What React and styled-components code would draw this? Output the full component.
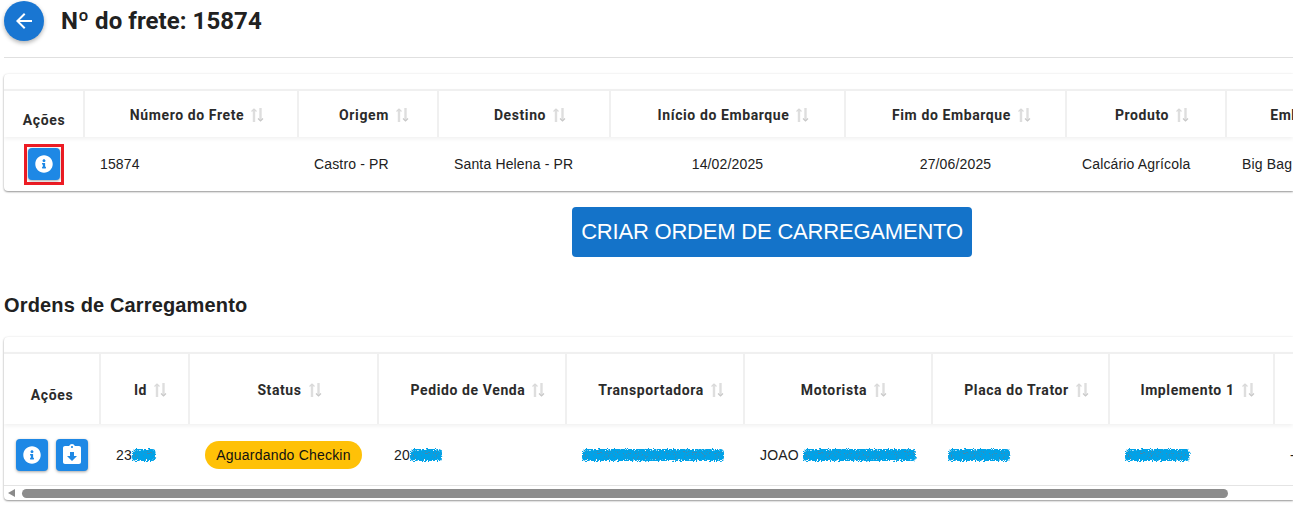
import React from "react";
import styled, { createGlobalStyle } from "styled-components";
import { FaInfoCircle } from "react-icons/fa";
import { MdArrowBack, MdAssignmentReturned } from "react-icons/md";

const GlobalStyle = createGlobalStyle`
  html, body {
    margin: 0;
    padding: 0;
    background: #fff;
    overflow: hidden;
  }
  body {
    width: 1293px;
    height: 505px;
    font-family: "Liberation Sans", Arial, sans-serif;
    color: #212121;
  }
`;

const Page = styled.div`
  width: 1293px;
  height: 505px;
  padding: 1px 0 0 4px;
  box-sizing: border-box;
  overflow: hidden;
`;

const TitleBar = styled.header`
  display: flex;
  align-items: center;
  gap: 17px;
  height: 40px;
`;

const BackButton = styled.button`
  width: 40px;
  height: 40px;
  border: 0;
  padding: 0;
  border-radius: 50%;
  background: #1976d2;
  color: #fff;
  display: flex;
  align-items: center;
  justify-content: center;
  box-shadow: 0 2px 4px rgba(0, 0, 0, 0.3);
`;

const Title = styled.h1`
  margin: 0;
  font: 700 24px Roboto, sans-serif;
  letter-spacing: 0.06px;
  color: #212121;
`;

const Divider = styled.hr`
  margin: 16px 0 16px;
  border: 0;
  border-top: 1px solid #e0e0e0;
`;

const Paper = styled.section`
  border-radius: 4px 0 0 4px;
  background: #fff;
  box-shadow: 0 1px 2px rgba(0, 0, 0, 0.4), 0 0 3px rgba(0, 0, 0, 0.06);
  overflow: hidden;
  padding-top: 16px;
`;

const Row = styled.div`
  display: grid;
  grid-template-columns: ${(p) => p.$columns};
  width: max-content;
`;

const HeadRow = styled(Row)`
  border-top: 2px solid #f0f0f0;
  height: ${(p) => p.$height}px;
  box-sizing: border-box;
  padding-left: 1px;
  margin-top: -1px;
  width: 100%;
  box-shadow: 0 2px 4px rgba(0, 0, 0, 0.06);
`;

const BodyRow = styled(Row)`
  height: ${(p) => p.$height}px;
`;

const HeadCell = styled.div`
  display: flex;
  align-items: ${(p) => (p.$plain ? "center" : "flex-start")};
  justify-content: center;
  gap: 6px;
  box-sizing: border-box;
  padding-top: ${(p) => (p.$plain ? "12px" : `${p.$top}px`)};
  padding-left: ${(p) => (p.$plain ? "0" : "12px")};
  border-right: 2px solid #f0f0f0;
  font: 700 14px/18px Roboto, sans-serif;
  letter-spacing: 0.6px;
  color: #2b2b2b;
  white-space: nowrap;
`;

const SortGlyph = styled.svg`
  flex: none;
  margin-top: 2px;
`;

const SortIcon = () => (
  <SortGlyph width="14" height="14" viewBox="0 0 14 14" fill="none">
    <path d="M4 14V1.5" stroke="#dedede" strokeWidth="2.4" />
    <path d="M1.5 3.5L4 1l2.5 2.5" stroke="#d8d8d8" strokeWidth="1.2" />
    <path d="M10.5 0v12.5" stroke="#dedede" strokeWidth="2.4" />
    <path d="M8 10.5l2.5 2.5 2.5-2.5" stroke="#c8c8c8" strokeWidth="1.2" />
  </SortGlyph>
);

const Cell = styled.div`
  display: flex;
  align-items: center;
  justify-content: ${(p) => (p.$center ? "center" : "flex-start")};
  padding-left: ${(p) => (p.$center ? "0" : "16px")};
  box-sizing: border-box;
  font-size: 14px;
  letter-spacing: 0.15px;
  color: #212121;
  white-space: nowrap;
  gap: ${(p) => p.$gap || 0}px;
`;

const IconButton = styled.button`
  width: 32px;
  height: 32px;
  border: 0;
  padding: 0;
  border-radius: 4px;
  background: #1e88e5;
  color: #fff;
  display: flex;
  align-items: center;
  justify-content: center;
  box-shadow: 0 1px 3px rgba(0, 0, 0, 0.35);
`;

const Highlight = styled.div`
  width: 40px;
  height: 41px;
  box-sizing: border-box;
  border: 3px solid #ed1c24;
  display: flex;
  align-items: center;
  justify-content: center;
`;

const CreateRow = styled.div`
  display: flex;
  padding-left: 568px;
  margin-top: 16px;
`;

const CreateButton = styled.button`
  width: 400px;
  height: 50px;
  border: 0;
  border-radius: 4px;
  background: #1473c9;
  color: #fff;
  font: 22px "Liberation Sans", Arial, sans-serif;
  letter-spacing: -0.2px;
  padding: 0;
`;

const SectionTitle = styled.h2`
  margin: 36px 0 20px;
  height: 24px;
  font: 700 20px/24px "Liberation Sans", Arial, sans-serif;
  letter-spacing: 0.15px;
  color: #212121;
`;

const Chip = styled.span`
  display: inline-flex;
  align-items: center;
  justify-content: center;
  width: 157px;
  height: 28px;
  border-radius: 14px;
  background: #ffc107;
  color: #111;
  font: 14px "Liberation Sans", Arial, sans-serif;
  letter-spacing: 0.2px;
`;

const Blob = styled.svg`
  display: block;
  flex: none;
  overflow: visible;
`;

// rasurado azul por cima dos dados sensiveis
const Scribble = ({ width }) => (
  <Blob width={width} height="14" viewBox={`0 0 ${width} 14`}>
    <filter id="rough" x="-5%" y="-30%" width="110%" height="160%" colorInterpolationFilters="sRGB">
      <feTurbulence type="fractalNoise" baseFrequency="0.9" numOctaves="2" seed="4" result="noise" />
      <feDisplacementMap in="SourceGraphic" in2="noise" scale="4" xChannelSelector="R" yChannelSelector="G" result="moved" />
      <feColorMatrix in="noise" type="matrix" values="0 0 0 0 0  0 0 0 0 0  0 0 0 0 0  7 0 0 0 -1.8" result="holes" />
      <feComposite in="moved" in2="holes" operator="in" />
    </filter>
    <rect x="1" y="3" width={width - 2} height="8" rx="3" fill="#4a86a8" />
    <rect x="0" y="1" width={width} height="12" rx="4" fill="#00a2e8" filter="url(#rough)" />
  </Blob>
);

const ScrollBar = styled.div`
  display: flex;
  align-items: center;
  height: 15px;
  border-top: 1px solid #e4e4e4;
  box-sizing: border-box;
  padding-left: 4px;
`;

const ScrollArrow = styled.span`
  width: 0;
  height: 0;
  border-top: 4px solid transparent;
  border-bottom: 4px solid transparent;
  border-right: 7px solid #8a8a8a;
`;

const ScrollThumb = styled.span`
  width: 1206px;
  height: 9px;
  margin-left: 7px;
  border-radius: 5px;
  background: #8c8c8c;
`;

const freightColumns = "80px 214px 140px 172px 235px 221px 160px 176px";
const orderColumns = "96px 89px 189px 188px 178px 188px 177px 165px 200px";

const freightHead = [
  "Número do Frete",
  "Origem",
  "Destino",
  "Início do Embarque",
  "Fim do Embarque",
  "Produto",
  "Embalagem",
];

const orderHead = [
  "Id",
  "Status",
  "Pedido de Venda",
  "Transportadora",
  "Motorista",
  "Placa do Trator",
  "Implemento 1",
  "Implemento 2",
];

const HeadCells = ({ labels, top }) =>
  labels.map((label) => (
    <HeadCell key={label} $top={top}>
      {label}
      <SortIcon />
    </HeadCell>
  ));

export default function App() {
  return (
    <Page>
      <GlobalStyle />
      <TitleBar>
        <BackButton>
          <MdArrowBack size={24} />
        </BackButton>
        <Title>Nº do frete: 15874</Title>
      </TitleBar>
      <Divider />

      <Paper>
        <HeadRow $columns={freightColumns} $height={48}>
          <HeadCell $plain>Ações</HeadCell>
          <HeadCells labels={freightHead} top={15} />
        </HeadRow>
        <BodyRow $columns={freightColumns} $height={54}>
          <Cell $center>
            <Highlight>
              <IconButton>
                <FaInfoCircle size={18} />
              </IconButton>
            </Highlight>
          </Cell>
          <Cell>15874</Cell>
          <Cell>Castro - PR</Cell>
          <Cell>Santa Helena - PR</Cell>
          <Cell $center>14/02/2025</Cell>
          <Cell $center>27/06/2025</Cell>
          <Cell>Calcário Agrícola</Cell>
          <Cell>Big Bag</Cell>
        </BodyRow>
      </Paper>

      <CreateRow>
        <CreateButton>CRIAR ORDEM DE CARREGAMENTO</CreateButton>
      </CreateRow>

      <SectionTitle>Ordens de Carregamento</SectionTitle>

      <Paper>
        <HeadRow $columns={orderColumns} $height={72}>
          <HeadCell $plain>Ações</HeadCell>
          <HeadCells labels={orderHead} top={27} />
        </HeadRow>
        <BodyRow $columns={orderColumns} $height={61}>
          <Cell $center $gap={8}>
            <IconButton>
              <FaInfoCircle size={18} />
            </IconButton>
            <IconButton>
              <MdAssignmentReturned size={24} />
            </IconButton>
          </Cell>
          <Cell>
            23
            <Scribble width={24} />
          </Cell>
          <Cell>
            <Chip>Aguardando Checkin</Chip>
          </Cell>
          <Cell>
            20
            <Scribble width={32} />
          </Cell>
          <Cell>
            <Scribble width={142} />
          </Cell>
          <Cell $gap={4}>
            JOAO
            <Scribble width={113} />
          </Cell>
          <Cell>
            <Scribble width={62} />
          </Cell>
          <Cell>
            <Scribble width={65} />
          </Cell>
          <Cell>-</Cell>
        </BodyRow>
        <ScrollBar>
          <ScrollArrow />
          <ScrollThumb />
        </ScrollBar>
      </Paper>
    </Page>
  );
}
